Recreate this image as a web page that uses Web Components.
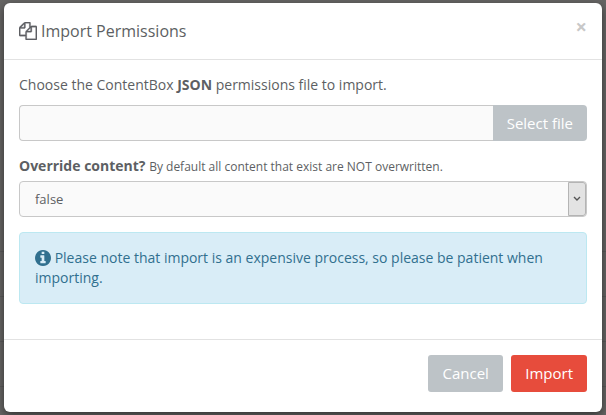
<!DOCTYPE html>
<html lang="en">
<head>
<meta charset="utf-8">
<title>Import Permissions</title>
<style>
html { min-height: 100%; background: #666564; }
body {
  margin: 0; padding: 3px 4px; font: 14px/20px "Open Sans", sans-serif; color: #5d5f63;
  background: repeating-linear-gradient(#5a5a5a 0 1px, transparent 1px 45px) 0 251px no-repeat;
}
strong { font-weight: 700; }
</style>
</head>
<body>
<modal-dialog>
  <modal-header slot="header">Import Permissions</modal-header>
  <file-picker>Choose the ContentBox <strong>JSON</strong> permissions file to import.</file-picker>
  <select-field hint="By default all content that exist are NOT overwritten.">Override content?</select-field>
  <info-alert>Please note that import is an expensive process, so please be patient when importing.</info-alert>
  <action-button slot="footer">Cancel</action-button>
  <action-button slot="footer" kind="danger">Import</action-button>
</modal-dialog>
<script>
const define = (name, html) => {
  const template = document.createElement('template');
  template.innerHTML = '<style>*{box-sizing:border-box}:host{display:block;box-sizing:border-box}</style>' + html;
  customElements.define(name, class extends HTMLElement {
    constructor() {
      super();
      this.attachShadow({ mode: 'open' }).append(template.content.cloneNode(true));
    }
    connectedCallback() {
      const hint = this.shadowRoot.querySelector('.hint');
      if (hint) hint.textContent = this.getAttribute('hint') || '';
    }
  });
};

define('modal-dialog', `
<style>
  :host { background: #fff; border-radius: 6px; box-shadow: 0 3px 9px rgba(0,0,0,.5); }
  .body { padding: 15px 15px 35px; display: grid; gap: 15px; }
  footer { display: flex; justify-content: flex-end; gap: 8px; padding: 15px 15px 20px; border-top: 1px solid #e2e2e2; }
</style>
<section role="dialog" aria-label="Import Permissions">
  <slot name="header"></slot>
  <div class="body"><slot></slot></div>
  <footer><slot name="footer"></slot></footer>
</section>`);

define('modal-header', `
<style>
  header { display: flex; align-items: flex-start; justify-content: space-between; padding: 15px; border-bottom: 1px solid #e2e2e2; }
  h4 { margin: 0; display: flex; align-items: center; gap: 4px; font-size: 16px; line-height: 26px; font-weight: 500; }
  svg { width: 18px; height: 18px; fill: currentColor; stroke: currentColor; stroke-width: 30; }
  button { border: 0; padding: 0; background: none; color: #c8c8c8; font: 700 20px/18px "Open Sans", sans-serif; }
</style>
<header>
  <h4><svg viewBox="0 0 1792 1792" aria-hidden="true"><path d="M1696 384q40 0 68 28t28 68v1216q0 40-28 68t-68 28h-960q-40 0-68-28t-28-68v-288h-544q-40 0-68-28t-28-68v-672q0-40 20-88t48-76l408-408q28-28 76-48t88-20h416q40 0 68 28t28 68v328q68-40 128-40h416zm-544 213l-299 299h299v-299zm-640-384l-299 299h299v-299zm196 647l316-316v-416h-384v416q0 40-28 68t-68 28h-416v640h512v-256q0-40 20-88t48-76zm956 804v-1152h-384v416q0 40-28 68t-68 28h-416v640h896z"/></svg><span><slot></slot></span></h4>
  <button type="button" title="Close">×</button>
</header>`);

define('file-picker', `
<style>
  label { display: block; margin-bottom: 10px; }
  .group { display: flex; height: 36px; }
  input { flex: 1; min-width: 0; border: 1px solid #c8c8c8; border-right: 0; border-radius: 4px 0 0 4px; background: #fafafa; padding: 6px 15px; font: inherit; color: inherit; outline: 0; }
  button { border: 0; border-radius: 0 4px 4px 0; background: #bdc3c7; color: #fff; padding: 0 14px; font: 15px/20px "Open Sans", sans-serif; }
</style>
<label for="file"><slot></slot></label>
<div class="group"><input id="file" type="text"><button type="button">Select file</button></div>`);

define('select-field', `
<style>
  label { display: block; margin-bottom: 5px; height: 20px; font-weight: 700; }
  .hint { font-size: 12px; line-height: 18px; font-weight: 400; }
  .box { display: grid; grid-template-columns: 1fr 18px; height: 36px; border: 1px solid #c8c8c8; border-radius: 4px; background: #fafafa; }
  select { grid-area: 1 / 1 / 2 / 3; appearance: none; border: 0; background: none; padding: 0 15px; font: 13px/20px "Open Sans", sans-serif; color: inherit; outline: 0; }
  .arrow { grid-area: 1 / 2; display: grid; place-items: center; pointer-events: none; background: #e3e3e3; border: 1px solid #b4b4b4; border-radius: 0 3px 3px 0; }
  svg { width: 8px; height: 6px; fill: none; stroke: #555; stroke-width: 1.4; }
</style>
<label for="choice"><slot></slot> <span class="hint"></span></label>
<div class="box">
  <select id="choice"><option>false</option><option>true</option></select>
  <span class="arrow"><svg viewBox="0 0 8 6" aria-hidden="true"><path d="M1 1l3 3 3-3"/></svg></span>
</div>`);

define('info-alert', `
<style>
  :host { padding: 15px; border: 1px solid #bce8f1; border-radius: 4px; background: #d9edf7; color: #31708f; }
  svg { width: 16px; height: 16px; fill: currentColor; vertical-align: -3px; }
</style>
<svg viewBox="128 128 1536 1536" aria-hidden="true"><path d="M1152 1376v-160q0-14-9-23t-23-9h-96v-512q0-14-9-23t-23-9h-320q-14 0-23 9t-9 23v160q0 14 9 23t23 9h96v320h-96q-14 0-23 9t-9 23v160q0 14 9 23t23 9h448q14 0 23-9t9-23zm-128-896v-160q0-14-9-23t-23-9h-192q-14 0-23 9t-9 23v160q0 14 9 23t23 9h192q14 0 23-9t9-23zm640 416q0 209-103 385.5t-279.5 279.5-385.5 103-385.5-103-279.5-279.5-103-385.5 103-385.5 279.5-279.5 385.5-103 385.5 103 279.5 279.5 103 385.5z"/></svg>
<slot></slot>`);

define('action-button', `
<style>
  button { border: 0; border-radius: 3px; background: #bdc3c7; color: #fff; height: 37px; min-width: 75px; padding: 0 14px 2px; font: 15px/20px "Open Sans", sans-serif; }
  :host([kind="danger"]) button { background: #e74c3c; }
</style>
<button type="button"><slot></slot></button>`);
</script>
</body>
</html>
